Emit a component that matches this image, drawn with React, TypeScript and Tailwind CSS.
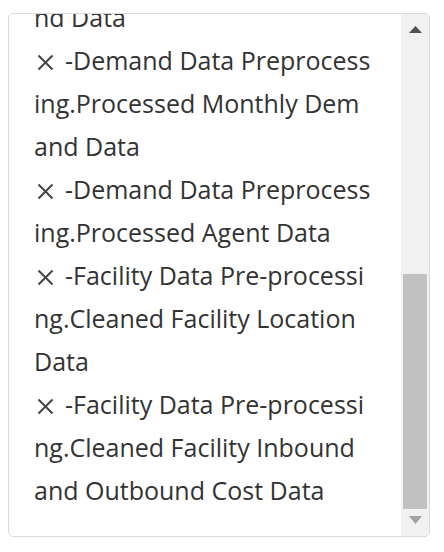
// labels as they wrap in the list (break-all at the box width)
const items = [
  ['-Demand Data Preprocess', 'ing.Processed Monthly Dem', 'and Data'],
  ['-Demand Data Preprocess', 'ing.Processed Agent Data'],
  ['-Facility Data Pre-processi', 'ng.Cleaned Facility Location', 'Data'],
  ['-Facility Data Pre-processi', 'ng.Cleaned Facility Inbound', 'and Outbound Cost Data'],
];

function CloseIcon() {
  return (
    <svg width="17" height="17" viewBox="0 0 17 17" className="inline-block align-[-1px] ml-[3px] mr-[11px]">
      <path d="M1.5 1.5 L15.5 15.5 M15.5 1.5 L1.5 15.5" stroke="#444" strokeWidth="2" />
    </svg>
  );
}

export default function App() {
  return (
    <div className="pl-[8px] pt-[13px] bg-white min-h-[552px]">
      <div className="w-[422px] h-[524px] border border-[#dadada] rounded-[5px] flex overflow-hidden bg-white">
        {/* list, scrolled to the bottom */}
        <div className="flex-1 overflow-hidden pl-[25px] pr-[20px]">
          <div
            className="text-[#333] text-[25px] leading-[43px] whitespace-nowrap mt-[-18.5px]"
            style={{ fontFamily: '"Open Sans", "Noto Sans", sans-serif' }}
          >
            <div>nd Data</div>
            {items.map((lines, i) => (
              <div key={i}>
                <CloseIcon />
                {lines.map((line, j) => (
                  <span key={j}>
                    {j > 0 && <br />}
                    {line}
                  </span>
                ))}
              </div>
            ))}
          </div>
        </div>

        {/* scrollbar */}
        <div className="w-[28px] bg-[#f1f1f1] flex flex-col">
          <div className="h-[31px] flex items-center justify-center">
            <svg width="13" height="7" viewBox="0 0 13 7">
              <polygon points="6.5,0 13,7 0,7" fill="#505050" />
            </svg>
          </div>
          <div className="flex-1 flex flex-col justify-end px-[2px]">
            <div className="h-[235px] bg-[#c1c1c1]" />
          </div>
          <div className="h-[27px] flex justify-center pt-[7px]">
            <svg width="13" height="8" viewBox="0 0 13 8">
              <polygon points="0,0 13,0 6.5,8" fill="#a3a3a3" />
            </svg>
          </div>
        </div>
      </div>
    </div>
  );
}
